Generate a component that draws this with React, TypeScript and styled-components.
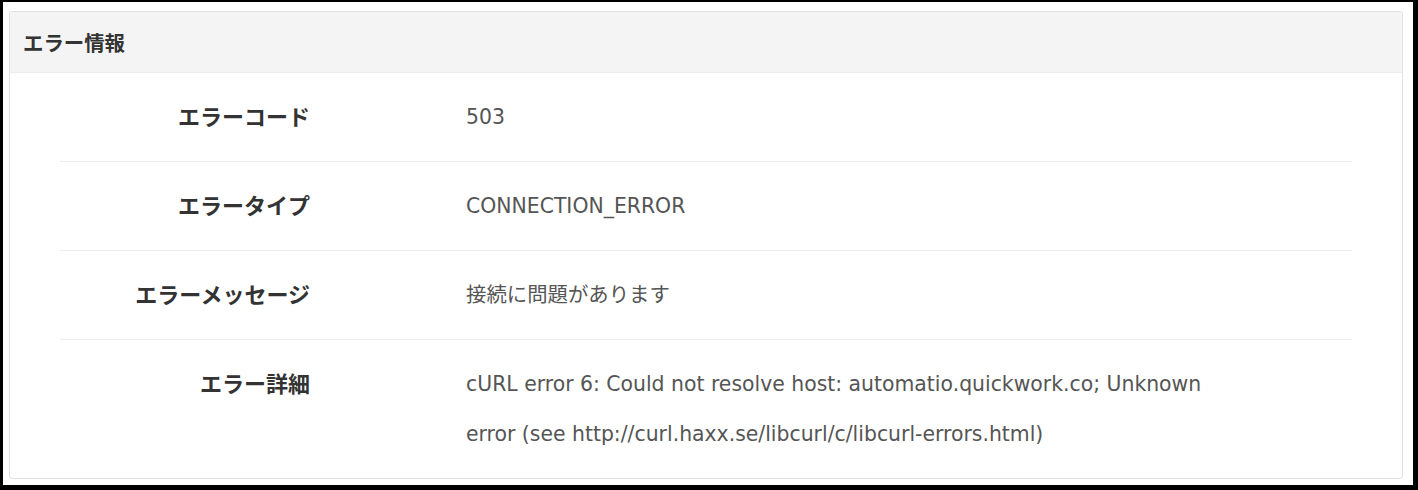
import React from "react";
import styled, { createGlobalStyle } from "styled-components";

const Global = createGlobalStyle`
  html, body { margin: 0; padding: 0; background: #fff; }
  * { box-sizing: border-box; }
`;

const Frame = styled.div`
  width: 1418px;
  height: 490px;
  border-style: solid;
  border-color: #000;
  border-width: 2px 5px 5px 3px;
  background: #fff;
  padding: 9px 10px 6px 6px;
  display: flex;
  flex-direction: column;
`;

const Panel = styled.section`
  flex: 1;
  border: 1px solid #e1e1e1;
  border-radius: 3px;
  background: #fff;
  display: flex;
  flex-direction: column;
  overflow: hidden;
`;

const Header = styled.header`
  flex-shrink: 0;
  height: 61px;
  background: #f4f4f4;
  border-bottom: 1px solid #ececec;
  display: flex;
  align-items: center;
  padding: 0 0 0 13px;
  font-family: "Noto Sans CJK JP", sans-serif;
  font-weight: 700;
  font-size: 20.4px;
  color: #333;
`;

const Body = styled.div`
  padding: 0 50px;
`;

const Row = styled.div<{ $last?: boolean }>`
  display: grid;
  grid-template-columns: 250px 750px;
  column-gap: 156px;
  padding: 17px 0 19px;
  border-bottom: ${(p) => (p.$last ? "none" : "1px solid #ececec")};
  line-height: 50px;
`;

const Label = styled.div`
  text-align: right;
  font-family: "Noto Sans CJK JP", sans-serif;
  font-weight: 700;
  font-size: 22px;
  color: #333;
`;

const Value = styled.div`
  padding-top: 2px;
  font-family: "DejaVu Sans", "Noto Sans CJK JP", sans-serif;
  font-size: 20.4px;
  line-height: 50px;
  color: #555;
`;

const rows = [
  { label: "エラーコード", value: "503" },
  { label: "エラータイプ", value: "CONNECTION_ERROR" },
  { label: "エラーメッセージ", value: "接続に問題があります" },
  {
    label: "エラー詳細",
    value:
      "cURL error 6: Could not resolve host: automatio.quickwork.co; Unknown error (see http://curl.haxx.se/libcurl/c/libcurl-errors.html)",
  },
];

export default function App() {
  return (
    <>
      <Global />
      <Frame>
        <Panel>
          <Header>エラー情報</Header>
          <Body>
            {rows.map((r, i) => (
              <Row key={r.label} $last={i === rows.length - 1}>
                <Label>{r.label}</Label>
                <Value>{r.value}</Value>
              </Row>
            ))}
          </Body>
        </Panel>
      </Frame>
    </>
  );
}
